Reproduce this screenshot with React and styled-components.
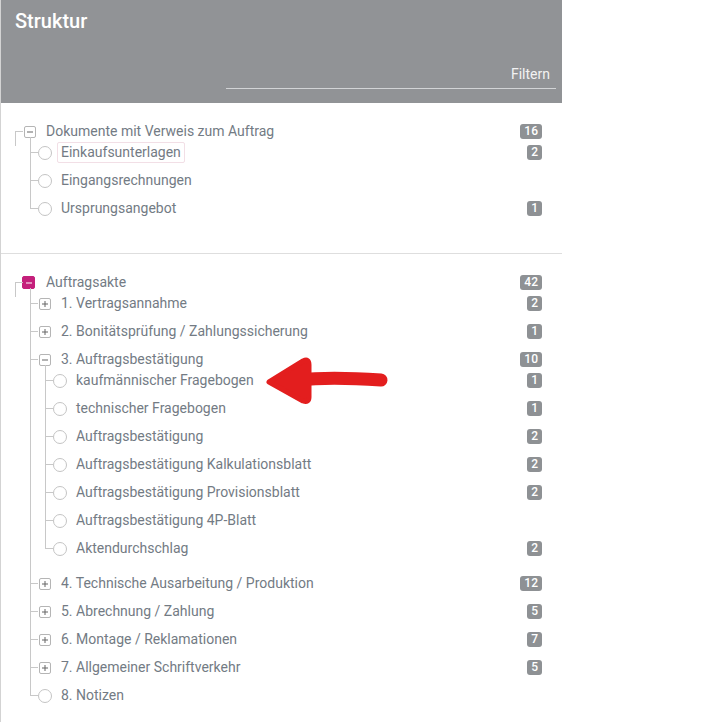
import { styled, createGlobalStyle } from "styled-components";

const GlobalStyle = createGlobalStyle`
  html, body {
    margin: 0;
    padding: 0;
    background: #ffffff;
    font-family: Roboto, "Noto Sans", Arial, sans-serif;
  }
`;

const documents = {
  label: "Dokumente mit Verweis zum Auftrag",
  count: 16,
  open: true,
  children: [
    { label: "Einkaufsunterlagen", count: 2, selected: true },
    { label: "Eingangsrechnungen" },
    { label: "Ursprungsangebot", count: 1 },
  ],
};

const akte = {
  label: "Auftragsakte",
  count: 42,
  open: true,
  active: true,
  children: [
    { label: "1. Vertragsannahme", count: 2, children: [] },
    { label: "2. Bonitätsprüfung / Zahlungssicherung", count: 1, children: [] },
    {
      label: "3. Auftragsbestätigung",
      count: 10,
      open: true,
      children: [
        { label: "kaufmännischer Fragebogen", count: 1 },
        { label: "technischer Fragebogen", count: 1 },
        { label: "Auftragsbestätigung", count: 2 },
        { label: "Auftragsbestätigung Kalkulationsblatt", count: 2 },
        { label: "Auftragsbestätigung Provisionsblatt", count: 2 },
        { label: "Auftragsbestätigung 4P-Blatt" },
        { label: "Aktendurchschlag", count: 2 },
      ],
    },
    { label: "4. Technische Ausarbeitung / Produktion", count: 12, children: [] },
    { label: "5. Abrechnung / Zahlung", count: 5, children: [] },
    { label: "6. Montage / Reklamationen", count: 7, children: [] },
    { label: "7. Allgemeiner Schriftverkehr", count: 5, children: [] },
    { label: "8. Notizen" },
  ],
};

function TreeNode({ node, root }) {
  const hasChildren = Array.isArray(node.children);
  return (
    <Item $root={root}>
      <Row>
        {hasChildren ? (
          <Toggle $active={node.active} $open={node.open} />
        ) : (
          <Leaf />
        )}
        <Label $selected={node.selected}>{node.label}</Label>
        {node.count != null && <Badge>{node.count}</Badge>}
      </Row>
      {hasChildren && node.open && node.children.length > 0 && (
        <List>
          {node.children.map((c) => (
            <TreeNode key={c.label} node={c} />
          ))}
        </List>
      )}
    </Item>
  );
}

function Arrow() {
  return (
    <ArrowSvg width="130" height="56" viewBox="0 0 130 56">
      <path
        d="M36 25 C60 22 90 23 118 25"
        stroke="#e31e1e"
        strokeWidth="13"
        strokeLinecap="round"
        fill="none"
      />
      <path
        d="M6 27 L40 6 Q46 3 46 10 L46 42 Q46 48 40 46 Z"
        fill="#e31e1e"
        stroke="#e31e1e"
        strokeWidth="5"
        strokeLinejoin="round"
      />
    </ArrowSvg>
  );
}

export default function App() {
  return (
    <>
      <GlobalStyle />
      <Panel>
        <Header>
          <Title>Struktur</Title>
          <Filter>Filtern</Filter>
        </Header>
        <Section>
          <RootList>
            <TreeNode node={documents} root />
          </RootList>
        </Section>
        <Section $last>
          <RootList>
            <TreeNode node={akte} root />
          </RootList>
        </Section>
        <Arrow />
      </Panel>
    </>
  );
}

const Panel = styled.div`
  position: relative;
  width: 561px;
  min-height: 100vh;
  border-left: 1px solid #d3d3d3;
  background: #fff;
`;

const Header = styled.div`
  height: 103px;
  background: #919396;
  display: flex;
  flex-direction: column;
  justify-content: space-between;
  box-sizing: border-box;
  padding-bottom: 14px;
`;

const Title = styled.div`
  color: #fff;
  font-size: 20px;
  font-weight: 500;
  line-height: 24px;
  padding: 9px 14px 0;
`;

const Filter = styled.div`
  margin-left: 225px;
  margin-right: 6px;
  padding: 0 6px 6px 0;
  border-bottom: 1px solid #d2d4d6;
  text-align: right;
  color: #f2f2f2;
  font-size: 14px;
  line-height: 16px;
`;

const Section = styled.div`
  padding: 18px 20px ${(p) => (p.$last ? "0" : "20px")} 14px;
  border-bottom: ${(p) => (p.$last ? "none" : "1px solid #dedede")};
`;

const RootList = styled.ul`
  list-style: none;
  margin: 0;
  padding: 0;
`;

const List = styled.ul`
  list-style: none;
  margin: 0;
  padding: 0 0 0 15px;
`;

const Item = styled.li`
  position: relative;
  padding-bottom: 7px;

  &::before {
    content: "";
    position: absolute;
    left: 0;
    width: 1px;
    background: #c8c8c8;
    top: ${(p) => (p.$root ? "10px" : "-5px")};
    height: ${(p) => (p.$root ? "15px" : "100%")};
  }

  &:last-child::before {
    height: ${(p) => (p.$root ? "15px" : "16px")};
  }

  &::after {
    content: "";
    position: absolute;
    left: 0;
    top: 10px;
    width: 8px;
    height: 1px;
    background: #c8c8c8;
  }
`;

const Row = styled.div`
  display: flex;
  align-items: center;
  height: 21px;
  padding-left: 8px;
`;

const Toggle = styled.span`
  box-sizing: border-box;
  width: ${(p) => (p.$active ? "13px" : "12px")};
  height: ${(p) => (p.$active ? "13px" : "12px")};
  margin-right: ${(p) => (p.$active ? "7px" : "6px")};
  margin-left: ${(p) => (p.$active ? "-1px" : "1px")};
  border: 1px solid ${(p) => (p.$active ? "#c4207b" : "#b5b5b5")};
  border-radius: 2px;
  background: ${(p) => (p.$active ? "#c4207b" : "#fff")};
  position: relative;
  flex-shrink: 0;

  &::before {
    content: "";
    position: absolute;
    left: 50%;
    top: 50%;
    width: 6px;
    height: 1px;
    transform: translate(-50%, -50%);
    background: ${(p) => (p.$active ? "#fff" : "#666")};
  }

  &::after {
    content: "";
    display: ${(p) => (p.$open ? "none" : "block")};
    position: absolute;
    left: 50%;
    top: 50%;
    width: 1px;
    height: 6px;
    transform: translate(-50%, -50%);
    background: #666;
  }
`;

const Leaf = styled.span`
  box-sizing: border-box;
  width: 14px;
  height: 14px;
  margin-right: 5px;
  border: 1px solid #c4c4c4;
  border-radius: 50%;
  background: #fff;
  flex-shrink: 0;
`;

const Label = styled.span`
  font-size: 14px;
  line-height: 19px;
  color: #737b84;
  padding: 0 3px;
  border: 1px solid ${(p) => (p.$selected ? "#f2dfe6" : "transparent")};
  border-radius: 2px;
  white-space: nowrap;
`;

const Badge = styled.span`
  margin-left: auto;
  min-width: 14px;
  height: 15px;
  padding: 0 4px;
  box-sizing: border-box;
  border-radius: 3px;
  background: #8e9194;
  color: #fff;
  font-size: 12px;
  font-weight: 500;
  line-height: 15px;
  text-align: center;
`;

const ArrowSvg = styled.svg`
  position: absolute;
  left: 262px;
  top: 355px;
  pointer-events: none;
`;
